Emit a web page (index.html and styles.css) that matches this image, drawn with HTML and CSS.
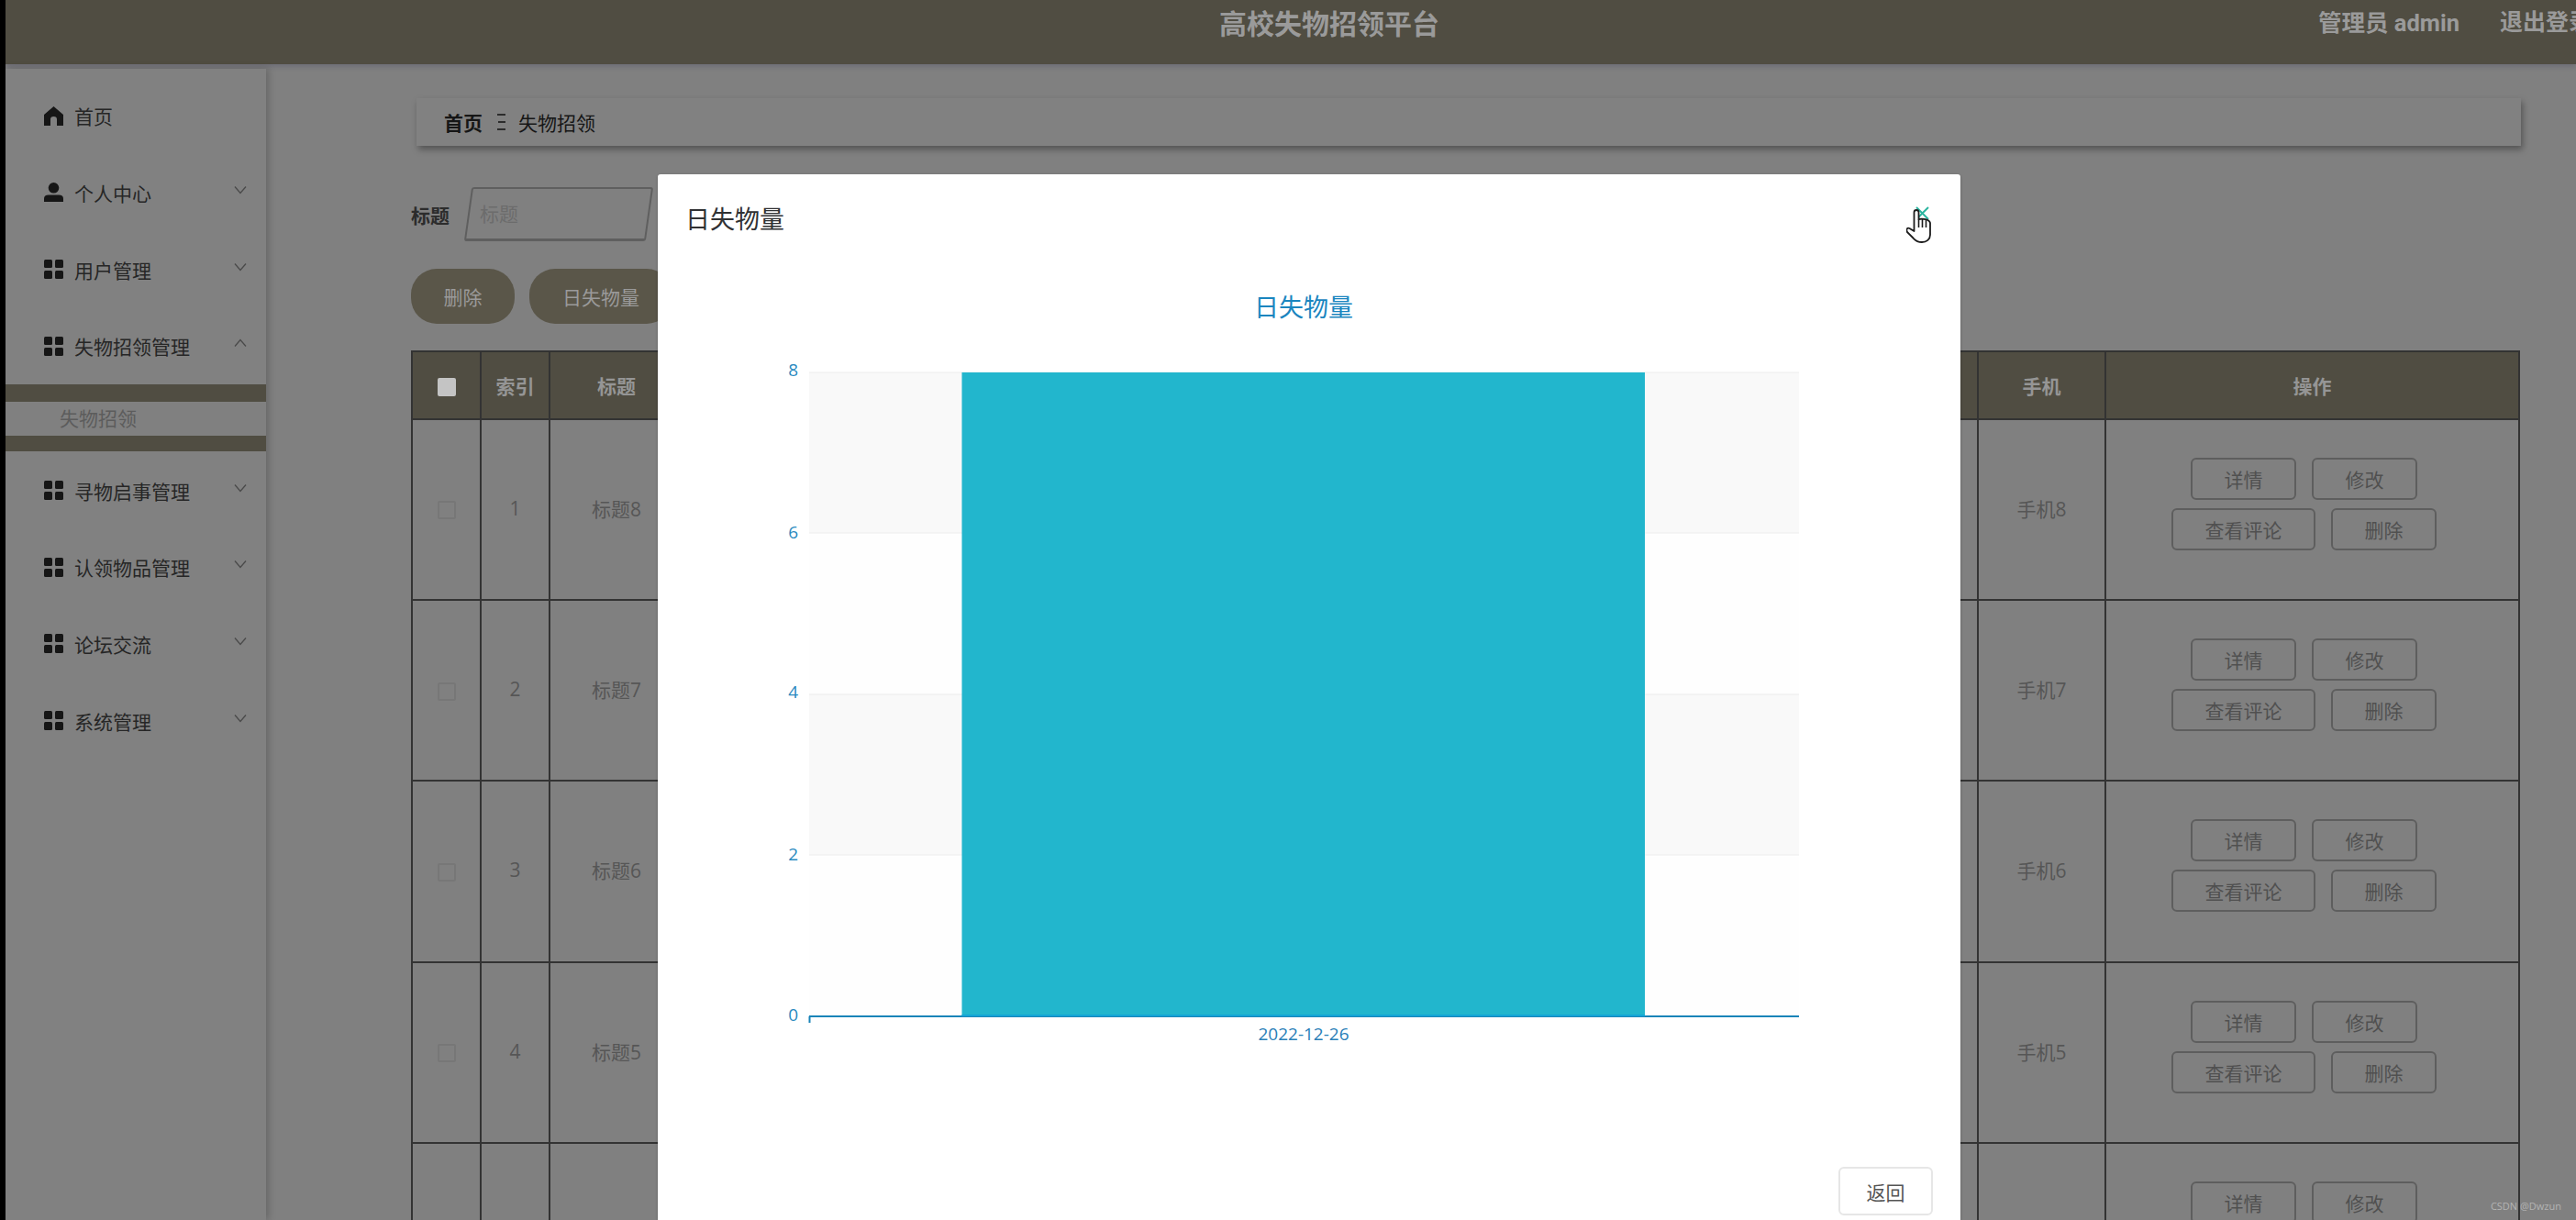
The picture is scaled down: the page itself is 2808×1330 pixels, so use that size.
FILE: index.html
```html
<!DOCTYPE html>
<html lang="zh-CN">
<head>
    <meta charset="UTF-8">
    <meta name="viewport" content="width=device-width, initial-scale=1.0">
    <title>高校失物招领平台</title>
    <link rel="stylesheet" href="styles.css">
</head>
<body>
<svg class="icon-defs" width="0" height="0">
    <symbol id="i-grid" viewBox="0 0 21 21">
        <rect x="0" y="0" width="9" height="9" rx="1.5"/>
        <rect x="12" y="0" width="9" height="9" rx="1.5"/>
        <rect x="0" y="12" width="9" height="9" rx="1.5"/>
        <rect x="12" y="12" width="9" height="9" rx="1.5"/>
    </symbol>
    <symbol id="i-down" viewBox="0 0 14 10">
        <path d="M1 1.5 L7 8.5 L13 1.5" fill="none" stroke="#4a4a4a" stroke-width="1.3"/>
    </symbol>
    <symbol id="i-up" viewBox="0 0 14 10">
        <path d="M1 8.5 L7 1.5 L13 8.5" fill="none" stroke="#4a4a4a" stroke-width="1.3"/>
    </symbol>
</svg>

<div class="page">
    <header class="top">
        <div class="top-title">高校失物招领平台</div>
        <div class="top-user">管理员 admin</div>
        <div class="top-logout">退出登录</div>
    </header>

    <div class="body">
        <aside class="side">
            <div class="menu-item">
                <svg class="menu-icon" viewBox="0 0 21 21"><path d="M10.5 0 L21 9 V21 H14 V14 Q14 11 10.5 11 Q7 11 7 14 V21 H0 V9 Z"/></svg>
                <span>首页</span>
            </div>
            <div class="menu-item">
                <svg class="menu-icon" viewBox="0 0 21 21"><circle cx="10.5" cy="5.8" r="5.8"/><path d="M0 21 V17.5 Q0 13.5 5 13.5 H16 Q21 13.5 21 17.5 V21 Z"/></svg>
                <span>个人中心</span>
                <svg class="menu-arrow"><use href="#i-down"/></svg>
            </div>
            <div class="menu-item">
                <svg class="menu-icon"><use href="#i-grid"/></svg>
                <span>用户管理</span>
                <svg class="menu-arrow"><use href="#i-down"/></svg>
            </div>
            <div class="menu-item">
                <svg class="menu-icon"><use href="#i-grid"/></svg>
                <span>失物招领管理</span>
                <svg class="menu-arrow"><use href="#i-up"/></svg>
            </div>
            <div class="submenu">
                <div class="submenu-item">失物招领</div>
            </div>
            <div class="menu-item">
                <svg class="menu-icon"><use href="#i-grid"/></svg>
                <span>寻物启事管理</span>
                <svg class="menu-arrow"><use href="#i-down"/></svg>
            </div>
            <div class="menu-item">
                <svg class="menu-icon"><use href="#i-grid"/></svg>
                <span>认领物品管理</span>
                <svg class="menu-arrow"><use href="#i-down"/></svg>
            </div>
            <div class="menu-item">
                <svg class="menu-icon"><use href="#i-grid"/></svg>
                <span>论坛交流</span>
                <svg class="menu-arrow"><use href="#i-down"/></svg>
            </div>
            <div class="menu-item">
                <svg class="menu-icon"><use href="#i-grid"/></svg>
                <span>系统管理</span>
                <svg class="menu-arrow"><use href="#i-down"/></svg>
            </div>
        </aside>

        <main class="main">
            <div class="crumb">
                <b>首页</b>
                <svg class="crumb-sep" viewBox="0 0 9 18"><path d="M0 1 H9 M1 9 H9 M0 17 H9" stroke="#111" stroke-width="1.6"/></svg>
                <span>失物招领</span>
            </div>

            <div class="search">
                <label class="search-label">标题</label>
                <div class="search-box"><input class="search-input" type="text" placeholder="标题"></div>
            </div>

            <div class="actions">
                <button class="pill pill-del">删除</button>
                <button class="pill pill-stat">日失物量</button>
            </div>

            <table class="grid">
                <colgroup>
                    <col class="c-check"><col class="c-index"><col class="c-title"><col class="c-rest"><col class="c-phone"><col class="c-ops">
                </colgroup>
                <thead>
                    <tr><th><span class="check check-head"></span></th><th>索引</th><th>标题</th><th></th><th>手机</th><th>操作</th></tr>
                </thead>
                <tbody>
                    <tr>
                        <td><span class="check"></span></td><td>1</td><td>标题8</td><td></td><td>手机8</td>
                        <td>
                            <div class="op-row"><button class="op">详情</button><button class="op">修改</button></div>
                            <div class="op-row"><button class="op op-wide">查看评论</button><button class="op">删除</button></div>
                        </td>
                    </tr>
                    <tr>
                        <td><span class="check"></span></td><td>2</td><td>标题7</td><td></td><td>手机7</td>
                        <td>
                            <div class="op-row"><button class="op">详情</button><button class="op">修改</button></div>
                            <div class="op-row"><button class="op op-wide">查看评论</button><button class="op">删除</button></div>
                        </td>
                    </tr>
                    <tr>
                        <td><span class="check"></span></td><td>3</td><td>标题6</td><td></td><td>手机6</td>
                        <td>
                            <div class="op-row"><button class="op">详情</button><button class="op">修改</button></div>
                            <div class="op-row"><button class="op op-wide">查看评论</button><button class="op">删除</button></div>
                        </td>
                    </tr>
                    <tr>
                        <td><span class="check"></span></td><td>4</td><td>标题5</td><td></td><td>手机5</td>
                        <td>
                            <div class="op-row"><button class="op">详情</button><button class="op">修改</button></div>
                            <div class="op-row"><button class="op op-wide">查看评论</button><button class="op">删除</button></div>
                        </td>
                    </tr>
                    <tr>
                        <td></td><td></td><td></td><td></td><td></td>
                        <td>
                            <div class="op-row"><button class="op">详情</button><button class="op">修改</button></div>
                            <div class="op-row"><button class="op op-wide">查看评论</button><button class="op">删除</button></div>
                        </td>
                    </tr>
                </tbody>
            </table>
        </main>
    </div>

    <!-- 弹窗 -->
    <div class="dialog">
        <div class="dialog-head">
            <span class="dialog-title">日失物量</span>
            <svg class="dialog-close" viewBox="0 0 15 15"><path d="M1 1 L14 14 M14 1 L1 14" stroke="#2cb5a0" stroke-width="2"/></svg>
        </div>

        <svg class="chart" width="1420" height="960" viewBox="0 0 1420 960">
            <text class="chart-title" x="704" y="46">日失物量</text>

            <rect x="165" y="118" width="1079" height="175" fill="#f9f9f9"/>
            <rect x="165" y="293" width="1079" height="176" fill="#fefefe"/>
            <rect x="165" y="469" width="1079" height="175" fill="#f9f9f9"/>
            <rect x="165" y="644" width="1079" height="176" fill="#fefefe"/>

            <path d="M165 118 H1244 M165 293 H1244 M165 469 H1244 M165 644 H1244" stroke="#ececec" stroke-width="1"/>

            <rect x="331.5" y="118" width="744.5" height="701" fill="#22b6cd"/>

            <path d="M165 820 H1244 M165.5 820 V827" fill="none" stroke="#1a84b8" stroke-width="2"/>
            <rect x="331.5" y="818" width="744.5" height="2" fill="#14a6d6"/>

            <text class="chart-num" x="153" y="115">8</text>
            <text class="chart-num" x="153" y="292">6</text>
            <text class="chart-num" x="153" y="466">4</text>
            <text class="chart-num" x="153" y="643">2</text>
            <text class="chart-num" x="153" y="818">0</text>
            <text class="chart-date" x="704" y="839">2022-12-26</text>
        </svg>

        <div class="dialog-foot">
            <button class="back">返回</button>
        </div>

        <svg class="hand" viewBox="0 0 27 37">
            <path d="M1 25 C-0.5 22 1 20 3.5 21 L8.5 24 V3.5 A2.5 2.5 0 0 1 13.5 3.5 V11 C18 10 25 11 26 15 V28 C26 33 22 36 17 36 C11 36 9 33 7 31 Z" fill="#fff" stroke="#1b1b1b" stroke-width="1.8" stroke-linejoin="round"/>
            <path d="M13.5 11 V20 M17.5 11 V20 M21.5 12 V20" fill="none" stroke="#1b1b1b" stroke-width="1.6"/>
        </svg>
    </div>

    <div class="mark">CSDN @Dwzun</div>
</div>
</body>
</html>
```

FILE: styles.css
```css
* {
    box-sizing: border-box;
}

html,
body {
    margin: 0;
    height: 100%;
    overflow: hidden;
}

body {
    font-family: "Open Sans", "Noto Sans CJK SC", sans-serif;
    background: #808080;
}

.icon-defs {
    position: absolute;
}

.page {
    position: relative;
    width: 2808px;
    height: 1330px;
    overflow: hidden;
    border-left: 6px solid #000;
    background: #808080;
}

/* 顶部 */
.top {
    display: flex;
    align-items: center;
    height: 70px;
    background: #504d42;
    color: #9a9a9a;
    font-weight: bold;
    white-space: nowrap;
    box-shadow: 0 3px 5px rgba(60, 60, 90, 0.25);
}

.top-title {
    flex: none;
    margin: -22px 0 0 1323px;
    font-size: 30px;
}

.top-user {
    flex: none;
    margin: -26px 0 0 958px;
    font-family: Roboto, "Noto Sans CJK SC", sans-serif;
    font-size: 25.5px;
}

.top-logout {
    flex: none;
    margin: -26px 0 0 44px;
    font-size: 25px;
}

.body {
    display: flex;
    align-items: flex-start;
}

/* 侧边栏 */
.side {
    flex: none;
    width: 284px;
    height: 1255px;
    margin-top: 5px;
    padding-top: 9.6px;
    background: #818181;
    box-shadow: 3px 0 8px rgba(0, 0, 0, 0.2);
}

.menu-item {
    display: flex;
    align-items: center;
    height: 83.6px;
    padding: 0 21px 0 42px;
    color: #262626;
    font-size: 21px;
}

.menu-icon {
    flex: none;
    width: 21px;
    height: 21px;
    margin-right: 12px;
    fill: #161616;
}

.menu-arrow {
    flex: none;
    width: 14px;
    height: 10px;
    margin: -6px 0 0 auto;
}

.submenu {
    margin-bottom: 1px;
    padding: 19px 0 17px;
    background: #504d42;
}

.submenu-item {
    height: 37px;
    padding-left: 59px;
    background: #808080;
    color: #5c5c5c;
    font-size: 21px;
    line-height: 36px;
}

/* 内容区 */
.main {
    flex: none;
    width: 2518px;
    margin-top: 5px;
    padding: 32px 0 0 158px;
}

.crumb {
    display: flex;
    align-items: center;
    width: 2294px;
    height: 52px;
    margin-left: 6px;
    padding-left: 30px;
    background: #818181;
    color: #161616;
    font-size: 21px;
    box-shadow: 2px 4px 7px rgba(0, 0, 0, 0.35);
}

.crumb-sep {
    width: 9px;
    height: 18px;
    margin: 0 14px 0 16px;
}

.search {
    display: flex;
    align-items: center;
    height: 59px;
    margin-top: 45px;
}

.search-label {
    margin-right: 20px;
    color: #2c2c2c;
    font-size: 21px;
    font-weight: bold;
}

.search-box {
    width: 198px;
    height: 59px;
    border: 2px solid #5f5f5f;
    border-bottom-width: 3px;
    border-radius: 3px;
    transform: skewX(-8deg);
}

.search-input {
    width: 100%;
    height: 100%;
    padding: 0 11px;
    border: 0;
    outline: 0;
    background: transparent;
    font-family: inherit;
    font-size: 21px;
    transform: skewX(8deg);
}

.search-input::placeholder {
    color: #6c6c6c;
}

.actions {
    display: flex;
    gap: 16px;
    margin-top: 30px;
}

.pill {
    height: 60px;
    padding: 0;
    border: 0;
    border-radius: 28px;
    background: #5a5649;
    color: #9a9a9a;
    font-family: inherit;
    font-size: 21px;
}

.pill-del {
    width: 113px;
}

.pill-stat {
    width: 156px;
}

/* 表格 */
.grid {
    width: 2297px;
    margin-top: 29px;
    border-collapse: collapse;
    table-layout: fixed;
    font-size: 21px;
}

.c-check,
.c-index {
    width: 75px;
}

.c-title {
    width: 146px;
}

.c-rest {
    width: 1411px;
}

.c-phone {
    width: 139px;
}

.c-ops {
    width: 451px;
}

.grid th,
.grid td {
    padding: 0;
    border: 2px solid #333;
    text-align: center;
    vertical-align: middle;
}

.grid th {
    height: 74px;
    background: #504d42;
    color: #959595;
    font-weight: bold;
}

.grid td {
    height: 197.2px;
    padding-bottom: 3px;
    color: #565656;
}

.check {
    display: inline-block;
    width: 20px;
    height: 20px;
    border: 2px solid #777;
    border-radius: 2px;
    vertical-align: middle;
}

.check-head {
    border-color: #c4c4c4;
    background: #c4c4c4;
}

.op-row {
    display: flex;
    justify-content: center;
    margin-bottom: 9px;
    padding-right: 18px;
}

.op {
    width: 115px;
    height: 46px;
    padding: 0;
    border: 2px solid #5e5e5e;
    border-radius: 6px;
    background: transparent;
    color: #505050;
    font-family: inherit;
    font-size: 21px;
}

.op + .op {
    margin-left: 17px;
}

.op-wide {
    width: 157px;
}

/* 弹窗 */
.dialog {
    position: absolute;
    top: 190px;
    left: 711px;
    width: 1420px;
    height: 1140px;
    border-radius: 3px 3px 0 0;
    background: #fff;
    box-shadow: 0 1px 3px rgba(0, 0, 0, 0.3);
}

.dialog-head {
    display: flex;
    align-items: flex-start;
    justify-content: space-between;
    height: 98px;
    padding: 30px 34px 0 30px;
}

.dialog-title {
    color: #303133;
    font-size: 27px;
    line-height: 38px;
}

.dialog-close {
    width: 15px;
    height: 15px;
    margin-top: 5px;
}

.chart {
    display: block;
}

.chart-title {
    fill: #1a85bf;
    font-size: 27px;
    text-anchor: middle;
    dominant-baseline: central;
}

.chart-num {
    fill: #2a8ac0;
    font-size: 19px;
    text-anchor: end;
    dominant-baseline: central;
}

.chart-date {
    fill: #2a80b8;
    font-size: 19px;
    text-anchor: middle;
    dominant-baseline: central;
}

.dialog-foot {
    display: flex;
    justify-content: flex-end;
    padding: 24px 30px 0 0;
}

.back {
    width: 103px;
    height: 53px;
    padding: 0;
    border: 2px solid #e6e6e6;
    border-radius: 6px;
    background: #fff;
    color: #555;
    font-family: inherit;
    font-size: 21px;
}

.hand {
    position: absolute;
    top: 38px;
    left: 1361px;
    width: 27px;
    height: 37px;
}

.mark {
    position: absolute;
    right: 16px;
    bottom: 8px;
    color: #b4b4b4;
    font-size: 11px;
}
```
